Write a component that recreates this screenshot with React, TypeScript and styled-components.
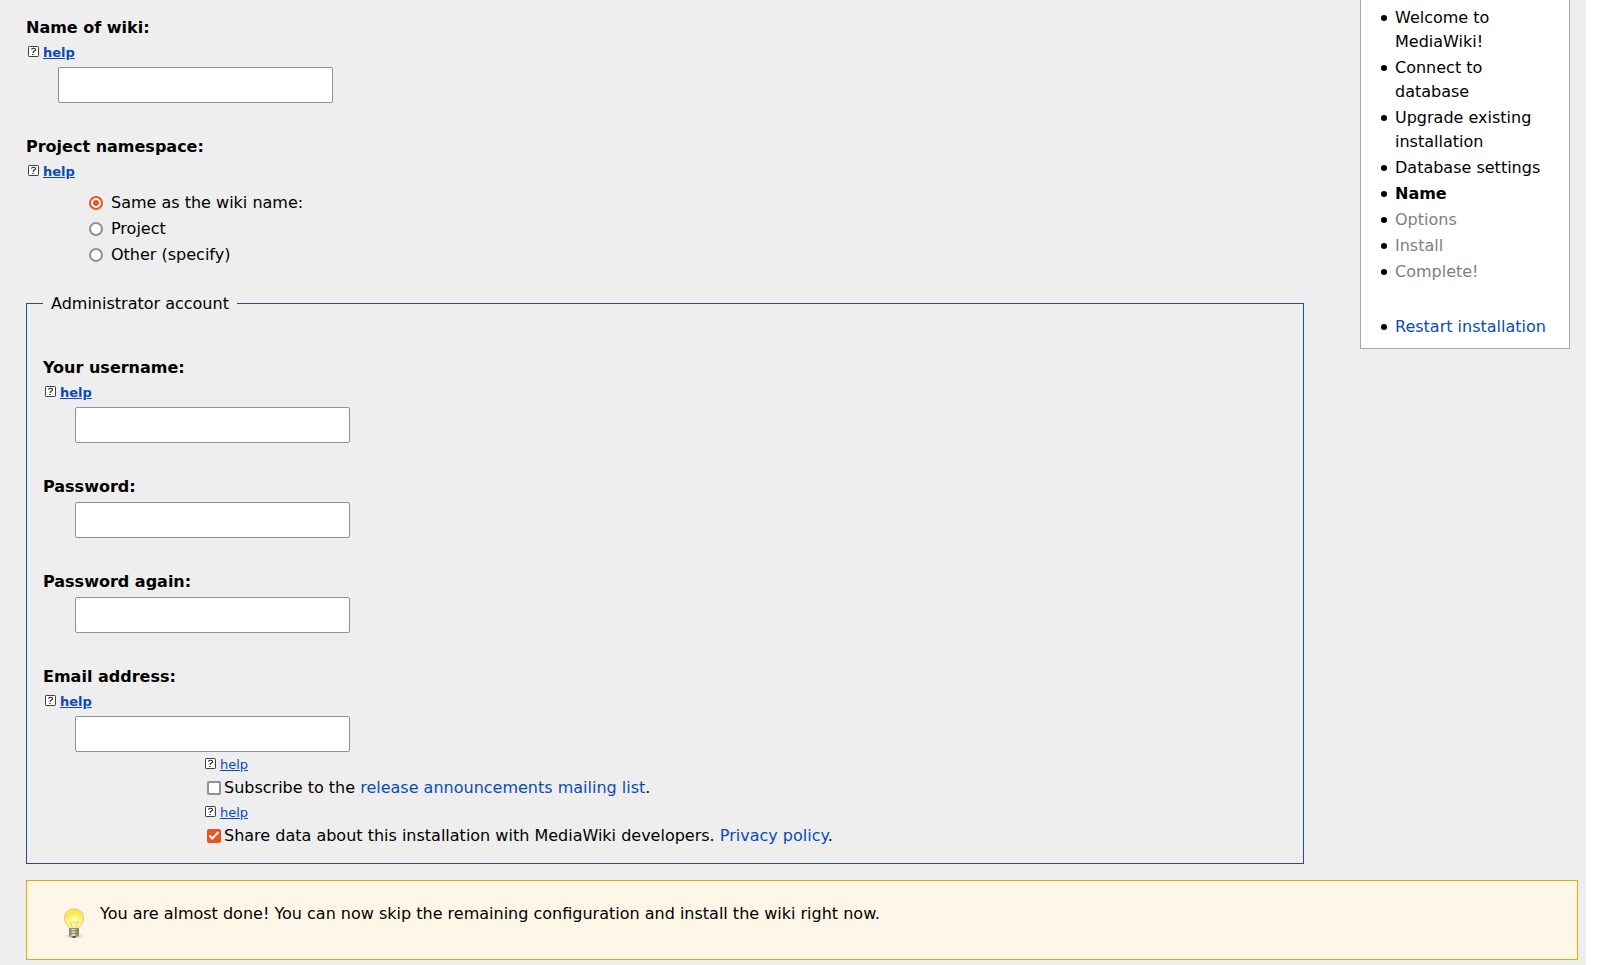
import React from "react";
import styled, { createGlobalStyle } from "styled-components";

const GlobalStyle = createGlobalStyle`
  *, *::before, *::after { box-sizing: border-box; }
  body {
    margin: 0;
    background: #fff;
    color: #000;
    font: 16px/24px "DejaVu Sans", sans-serif;
  }
`;

const Page = styled.div`
  min-height: 100vh;
  margin-right: 23px;
  padding: 0 8px 0 26px;
  background: #eee;
`;

const Columns = styled.div`
  display: flex;
  align-items: flex-start;
  gap: 56px;
  padding-right: 8px;
`;

const Form = styled.form`
  flex: 1;
  min-width: 0;
  padding-top: 16px;
`;

const Field = styled.div`
  margin-bottom: 32px;
`;

const FieldLabel = styled.label<{ $spaced?: boolean }>`
  display: block;
  font-weight: bold;
  margin-bottom: ${(p) => (p.$spaced ? 3 : 0)}px;
`;

const TextInput = styled.input`
  display: block;
  width: 275px;
  height: 36px;
  margin-left: 32px;
  padding: 0 8px;
  border: 1px solid #8f8f9d;
  border-radius: 2px;
  background: #fff;
  font: inherit;
`;

const HelpRow = styled.div<{ $bold?: boolean }>`
  display: flex;
  gap: 4px;
  height: ${(p) => (p.$bold ? 27 : 24)}px;
  padding: 6px 0 0 2px;
  font-size: 13px;
  line-height: 13px;
  font-weight: ${(p) => (p.$bold ? "bold" : "normal")};
`;

const Link = styled.a<{ $underlined?: boolean }>`
  color: #0b4bb5;
  text-decoration: ${(p) => (p.$underlined ? "underline" : "none")};
`;

const RadioGroup = styled.div.attrs({ role: "radiogroup" })`
  display: grid;
  gap: 2px;
  padding: 5px 0 0 63px;
`;

const RadioLabel = styled.label`
  display: flex;
  align-items: center;
  gap: 8px;
`;

const Radio = styled.input.attrs({ type: "radio" })`
  appearance: none;
  display: grid;
  place-items: center;
  width: 14px;
  height: 14px;
  margin: 0;
  border: 2px solid #8f8f9d;
  border-radius: 50%;
  background: #fff;

  &:checked { border-color: #e95420; }
  &:checked::after {
    content: "";
    width: 6px;
    height: 6px;
    border-radius: 50%;
    background: #e95420;
  }
`;

const Fieldset = styled.fieldset`
  min-width: 0;
  margin: 0;
  padding: 40px 16px 15px;
  border: 1px solid #2a4b8d;
`;

const Legend = styled.legend`
  padding: 2px 8px 0;
`;

const Options = styled.div`
  margin: -32px 0 0 160px;
`;

const CheckRow = styled.div`
  display: flex;
  align-items: center;
  gap: 3px;
  padding-left: 4px;
`;

const Checkbox = styled.input.attrs({ type: "checkbox" })`
  appearance: none;
  flex: none;
  display: grid;
  place-items: center;
  width: 14px;
  height: 14px;
  margin: 0;
  border: 2px solid #8f8f9d;
  border-radius: 2px;
  background: #fff;

  &:checked {
    border-color: #e95420;
    background: #e95420;
  }
  &:checked::after {
    content: "";
    width: 10px;
    height: 5px;
    margin-bottom: 3px;
    border: solid #fff;
    border-width: 0 0 2px 2px;
    transform: rotate(-45deg);
  }
`;

const Sidebar = styled.nav`
  flex: none;
  width: 210px;
  padding: 6px 16px 7px 20px;
  border: 1px solid #a2a9b1;
  border-top: 0;
  background: #fff;
`;

const StepList = styled.ul`
  margin: 0;
  padding: 0;
  list-style: none;

  & + & { margin-top: 31px; }
`;

const Step = styled.li<{ $state?: "current" | "pending" }>`
  display: flex;
  gap: 8px;
  margin-bottom: 2px;
  color: ${(p) => (p.$state === "pending" ? "#808080" : "#000")};
  font-weight: ${(p) => (p.$state === "current" ? "bold" : "normal")};

  &::before {
    content: "";
    flex: none;
    width: 6px;
    height: 6px;
    margin-top: 9px;
    border-radius: 50%;
    background: #000;
  }
`;

const Notice = styled.div`
  display: flex;
  gap: 15px;
  height: 80px;
  margin-top: 16px;
  padding: 21px 36px;
  border: 1px solid #eaab00;
  background: #fef6e7;

  svg { flex: none; margin-top: 6px; }
  p { margin: 0; }
`;

const HelpIcon = () => (
  <svg width="11" height="11" viewBox="0 0 11 11" aria-hidden="true">
    <rect x=".5" y=".5" width="10" height="10" rx=".7" fill="#fff" stroke="#404040" />
    <path d="M3.5 3.6C3.7 1.8 7.7 1.8 7.5 3.8C7.3 5.1 5.2 5.1 5 6.9" fill="none" stroke="#222" strokeWidth="1.1" />
    <path d="M4.3 8.5h1.3" stroke="#222" strokeWidth="1.1" />
  </svg>
);

const Bulb = () => (
  <svg width="22" height="32" viewBox="0 0 22 32" aria-hidden="true">
    <defs>
      <radialGradient id="glass" cx=".5" cy=".6" r=".6">
        <stop offset="0" stopColor="#fffcb8" />
        <stop offset=".55" stopColor="#fff68e" />
        <stop offset="1" stopColor="#fbdc50" />
      </radialGradient>
      <radialGradient id="shade">
        <stop offset="0" stopColor="#4d4740" stopOpacity=".7" />
        <stop offset="1" stopColor="#aaa398" stopOpacity="0" />
      </radialGradient>
      <linearGradient id="cap">
        <stop offset="0" stopColor="#858465" />
        <stop offset=".4" stopColor="#e9e8cb" />
        <stop offset="1" stopColor="#757350" />
      </linearGradient>
    </defs>
    <ellipse cx="11" cy="28" rx="10" ry="2.5" fill="url(#shade)" />
    <path
      d="M6.4 20.5C6.2 17.6 1.5 16 1.5 10.2C1.5 4.5 5.7 1 11 1s9.5 3.5 9.5 9.2c0 5.8-4.7 7.4-4.9 10.3z"
      fill="url(#glass)"
      stroke="#e3cb70"
    />
    <path d="M3.8 9.6C4 .8 18 .8 18.2 9.6C15.6 12.8 15 7.4 11 7.4S6.4 12.8 3.8 9.6z" fill="#ffe638" opacity=".6" />
    <path d="M9.4 20L7.2 13.5l2.6 1.4L11 13.3l1.2 1.6 2.6-1.4-2.2 6.5" fill="none" stroke="#e6d168" strokeWidth=".8" />
    <path d="M6.5 20.5h9v6.4l-2 1.8h-5l-2-1.8z" fill="url(#cap)" stroke="#77755a" strokeWidth=".7" />
    <path d="M6.5 23l9-.7M6.5 25.7l9-.7" stroke="#74735a" strokeWidth=".8" />
    <path d="M9 28.2h4l-1 1.8h-2z" fill="#494840" />
  </svg>
);

const Help = ({ bold }: { bold?: boolean }) => (
  <HelpRow $bold={bold}>
    <HelpIcon />
    <Link href="#help" $underlined>help</Link>
  </HelpRow>
);

const TextField = ({ id, label, type = "text", help }: { id: string; label: string; type?: string; help?: boolean }) => (
  <Field>
    <FieldLabel htmlFor={id} $spaced={!help}>{label}</FieldLabel>
    {help && <Help bold />}
    <TextInput id={id} type={type} />
  </Field>
);

const NAMESPACES = ["Same as the wiki name:", "Project", "Other (specify)"];

const STEPS: { name: string; state?: "current" | "pending" }[] = [
  { name: "Welcome to MediaWiki!" },
  { name: "Connect to database" },
  { name: "Upgrade existing installation" },
  { name: "Database settings" },
  { name: "Name", state: "current" },
  { name: "Options", state: "pending" },
  { name: "Install", state: "pending" },
  { name: "Complete!", state: "pending" },
];

const NamespaceField = styled(Field)`
  margin-bottom: 23px;
`;

export default function App() {
  return (
    <>
      <GlobalStyle />
      <Page>
        <Columns>
          <Form>
            <TextField id="wiki-name" label="Name of wiki:" help />
            <NamespaceField>
              <FieldLabel as="div" id="namespace-label">Project namespace:</FieldLabel>
              <Help bold />
              <RadioGroup aria-labelledby="namespace-label">
                {NAMESPACES.map((name, i) => (
                  <RadioLabel key={name}>
                    <Radio name="namespace" defaultChecked={i === 0} />
                    {name}
                  </RadioLabel>
                ))}
              </RadioGroup>
            </NamespaceField>
            <Fieldset>
              <Legend>Administrator account</Legend>
              <TextField id="username" label="Your username:" help />
              <TextField id="password" label="Password:" type="password" />
              <TextField id="password-again" label="Password again:" type="password" />
              <TextField id="email" label="Email address:" type="email" help />
              <Options>
                <Help />
                <CheckRow>
                  <Checkbox id="subscribe" />
                  <label htmlFor="subscribe">
                    Subscribe to the <Link href="#mailing-list">release announcements mailing list</Link>.
                  </label>
                </CheckRow>
                <Help />
                <CheckRow>
                  <Checkbox id="share" defaultChecked />
                  <label htmlFor="share">
                    Share data about this installation with MediaWiki developers.{" "}
                    <Link href="#privacy">Privacy policy</Link>.
                  </label>
                </CheckRow>
              </Options>
            </Fieldset>
          </Form>
          <Sidebar>
            <StepList>
              {STEPS.map(({ name, state }) => (
                <Step key={name} $state={state}>{name}</Step>
              ))}
            </StepList>
            <StepList>
              <Step><Link href="#restart">Restart installation</Link></Step>
            </StepList>
          </Sidebar>
        </Columns>
        <Notice>
          <Bulb />
          <p>You are almost done! You can now skip the remaining configuration and install the wiki right now.</p>
        </Notice>
      </Page>
    </>
  );
}
